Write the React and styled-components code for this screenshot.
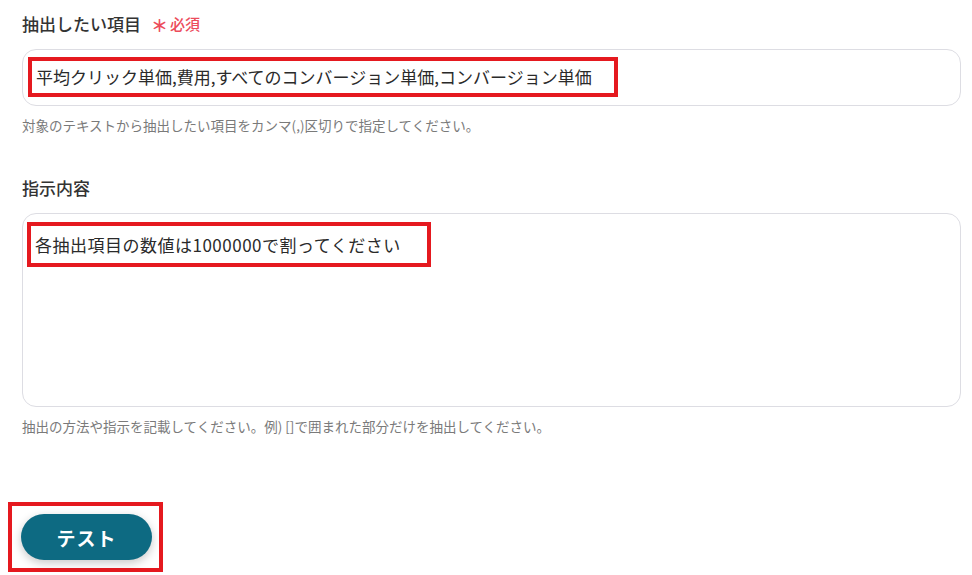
import React from "react";
import styled, { createGlobalStyle } from "styled-components";

const Global = createGlobalStyle`
  html, body { margin: 0; padding: 0; background: #ffffff; }
  body { font-family: "Noto Sans CJK JP", "Noto Sans", sans-serif; color: #333333; }
  * { box-sizing: border-box; }
`;

const Page = styled.div`
  width: 972px;
  height: 575px;
  overflow: hidden;
  padding: 12px 11px 0 22px;
  display: flex;
  flex-direction: column;
`;

const Field = styled.section`
  display: flex;
  flex-direction: column;
  margin-bottom: ${(p) => p.$gap || 0}px;
`;

const Label = styled.div`
  display: flex;
  align-items: center;
  gap: 10px;
  font-size: 17px;
  font-weight: 500;
  line-height: 24px;
  color: #333333;
  margin-bottom: 13px;
`;

const Required = styled.span`
  display: inline-flex;
  align-items: center;
  gap: 2px;
  font-size: 15px;
  font-weight: 500;
  color: #ec4c5b;
`;

const Star = styled.span`
  font-size: 17px;
  font-weight: 700;
  line-height: 1;
`;

const Box = styled.div`
  border: 1px solid #dddde3;
  border-radius: 14px;
  background: #ffffff;
  height: ${(p) => p.$height}px;
  padding: ${(p) => p.$pad};
  display: flex;
  align-items: flex-start;
`;

const Mark = styled.span`
  display: inline-block;
  border: 4px solid #e5191f;
  padding: ${(p) => p.$pad};
  font-size: 17px;
  letter-spacing: ${(p) => p.$ls || 0}px;
  line-height: ${(p) => p.$lh}px;
  color: #2a2a2a;
  white-space: nowrap;
`;

const Help = styled.div`
  font-size: 13.5px;
  line-height: 18px;
  color: #7a7a7a;
  margin-top: 10px;
`;

const ButtonFrame = styled.div`
  align-self: flex-start;
  margin-left: -14px;
  border: 4px solid #e5191f;
  padding: 8px 7px 8px 9px;
`;

const Button = styled.button`
  width: 131px;
  height: 46px;
  border: none;
  border-radius: 23px;
  background: #0d6a82;
  color: #ffffff;
  font-family: "Noto Sans CJK JP", sans-serif;
  font-size: 19px;
  font-weight: 700;
  letter-spacing: 1px;
  box-shadow: 0 3px 10px rgba(0, 0, 0, 0.22);
  display: flex;
  align-items: center;
  justify-content: center;
`;

export default function App() {
  return (
    <>
      <Global />
      <Page>
        <Field $gap={42}>
          <Label>
            抽出したい項目
            <Required>
              <Star>＊</Star>必須
            </Required>
          </Label>
          <Box $height={57} $pad="7px 0 0 5px">
            <Mark $pad="0 22px 0 4px" $lh={32}>
              平均クリック単価,費用,すべてのコンバージョン単価,コンバージョン単価
            </Mark>
          </Box>
          <Help>対象のテキストから抽出したい項目をカンマ(,)区切りで指定してください。</Help>
        </Field>
        <Field $gap={67}>
          <Label>指示内容</Label>
          <Box $height={194} $pad="8px 0 0 4px">
            <Mark $pad="0 26px 0 4px" $lh={37} $ls={0.5}>
              各抽出項目の数値は1000000で割ってください
            </Mark>
          </Box>
          <Help>抽出の方法や指示を記載してください。例) []で囲まれた部分だけを抽出してください。</Help>
        </Field>
        <ButtonFrame>
          <Button>テスト</Button>
        </ButtonFrame>
      </Page>
    </>
  );
}
